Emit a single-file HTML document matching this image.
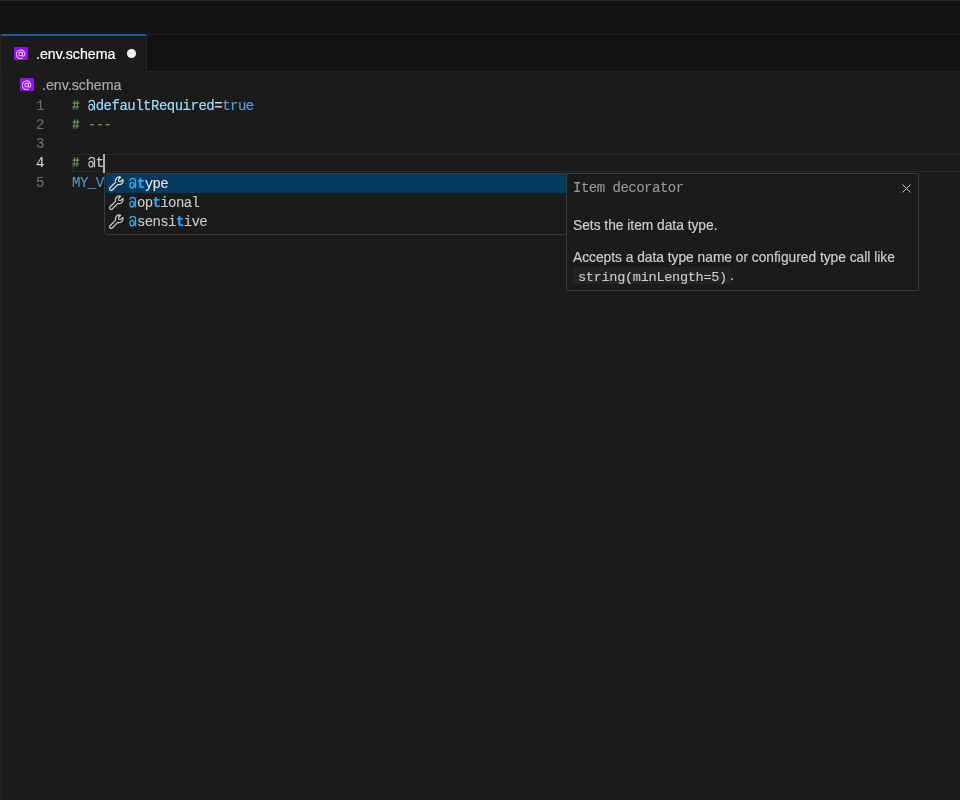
<!DOCTYPE html>
<html><head><meta charset="utf-8">
<style>
*{margin:0;padding:0;box-sizing:border-box}
body *{-webkit-text-stroke:0.2px currentColor}
html,body{-webkit-font-smoothing:antialiased;width:960px;height:800px;overflow:hidden;background:#1b1b1b;font-family:"Liberation Sans",sans-serif}
.abs{position:absolute;will-change:transform}
#title{left:0;top:0;width:960px;height:34px;background:#141414;border-top:1px solid #282828}
#tabs{left:0;top:34px;width:960px;height:38px;background:#121212;border-bottom:1px solid #242424;border-top:1px solid #1f1f1f}
#tab{left:0;top:34px;width:147px;height:38px;background:#1b1b1b;border-right:1px solid #242424;border-left:1px solid #242424}
#tabline{left:1px;top:34px;width:145px;height:2px;background:#1d5896}
.ficon{width:14px;height:13px;background:#8a14f0;border-radius:1px}
.ficon svg{position:absolute;left:1.8px;top:1.6px}
#tabtext{left:36px;top:45px;font-size:14.2px;color:#ffffff;line-height:18px;white-space:nowrap}
#dot{left:126.6px;top:49px;width:8.6px;height:8.6px;border-radius:50%;background:#f0f0f0}
#crumb{left:42px;top:76px;font-size:14.2px;color:#a9a9a9;line-height:18px;white-space:nowrap}
.code{font-family:"Liberation Mono",monospace;font-size:14px;letter-spacing:-0.5px;-webkit-text-stroke:0.1px currentColor;white-space:pre;line-height:19px}
.ln{left:0;width:44px;text-align:right;color:#6c6c6c}
.line{left:72px}
#curline{left:72px;top:154px;width:888px;height:18px;border:1px solid #282828;border-right:none}
#cursor{left:102.5px;top:153.5px;width:2px;height:18.5px;background:#aeafad}
#suggest{left:104px;top:173px;width:463px;height:62px;background:#1b1b1b;border:1px solid #3a3a3a;border-radius:3px;overflow:hidden}
.row{position:absolute;left:1px;width:460px;height:19px}
.row.sel{background:#04395e}
.hl{color:#2aaaff;font-weight:bold}
.hash{display:inline-block;width:7.9px;height:19px;vertical-align:top;position:relative}
.hash svg{position:absolute;left:0;top:0}
.atg{display:inline-block;width:7.9px;height:19px;vertical-align:top;position:relative}
.atg svg{position:absolute;left:0;top:0}
#details{left:566px;top:173px;width:353px;height:118px;background:#1b1b1b;border:1px solid #3a3a3a}
.dtext{font-size:13.75px;color:#cccccc;white-space:nowrap;line-height:16px}
.inl{background:#232323;border-radius:3px}
</style></head><body>
<div id="title" class="abs"></div>
<div id="tabs" class="abs"></div>
<div id="tab" class="abs"></div>
<div id="tabline" class="abs"></div>
<div class="abs ficon" style="left:14px;top:47px"><svg width="10" height="10" viewBox="0 0 10 10"><g fill="none" stroke="#f4b4ff" stroke-width="1.15"><circle cx="4.6" cy="5" r="1.85"/><path d="M6.45 3.1V5.9c0 .9.5 1.3 1.1 1.3s1.3-.5 1.3-1.9A4.3 4.3 0 1 0 6.6 9"/></g></svg></div>
<div id="tabtext" class="abs">.env.schema</div>
<div id="dot" class="abs"></div>
<div class="abs ficon" style="left:20px;top:78px"><svg width="10" height="10" viewBox="0 0 10 10"><g fill="none" stroke="#f4b4ff" stroke-width="1.15"><circle cx="4.6" cy="5" r="1.85"/><path d="M6.45 3.1V5.9c0 .9.5 1.3 1.1 1.3s1.3-.5 1.3-1.9A4.3 4.3 0 1 0 6.6 9"/></g></svg></div>
<div id="crumb" class="abs">.env.schema</div>

<div class="abs" style="left:0;top:72px;width:1px;height:728px;background:#222222"></div>
<div id="curline" class="abs"></div>
<div class="abs code ln" style="top:96.5px">1</div>
<div class="abs code ln" style="top:115.5px">2</div>
<div class="abs code ln" style="top:134.5px">3</div>
<div class="abs code ln" style="top:153.5px;color:#cccccc">4</div>
<div class="abs code ln" style="top:173.6px">5</div>
<div class="abs code line" style="top:96.5px"><span class="hash"><svg width="8" height="19" viewBox="0 0 8 19"><path d="M2.9 3.4L1.8 12.8M5.8 3.4L4.7 12.8M0.6 6.1H7.3M0.3 10H7" stroke="#6a9955" stroke-width="1.05" fill="none"/></svg></span> <span class="atg"><svg width="8" height="19" viewBox="0 0 8 19"><path d="M0.8 5.6C1.2 4 2.3 3.4 3.9 3.4 5.7 3.4 6.5 4.4 6.5 6.5V13.3M3 7.3C1.8 7.3 0.9 8.4 0.9 10.2S1.8 13 3 13 5.1 12 5.1 10.2 4.2 7.3 3 7.3Z" fill="none" stroke="#9cdcfe" stroke-width="1.15"/></svg></span><span style="color:#9cdcfe">defaultRequired</span><span style="color:#d4d4d4">=</span><span style="color:#569cd6">true</span></div>
<div class="abs code line" style="top:115.5px;color:#6a9955"><span class="hash"><svg width="8" height="19" viewBox="0 0 8 19"><path d="M2.9 3.4L1.8 12.8M5.8 3.4L4.7 12.8M0.6 6.1H7.3M0.3 10H7" stroke="#6a9955" stroke-width="1.05" fill="none"/></svg></span> ---</div>
<div class="abs code line" style="top:153.5px"><span class="hash"><svg width="8" height="19" viewBox="0 0 8 19"><path d="M2.9 3.4L1.8 12.8M5.8 3.4L4.7 12.8M0.6 6.1H7.3M0.3 10H7" stroke="#6a9955" stroke-width="1.05" fill="none"/></svg></span> <span class="atg"><svg width="8" height="19" viewBox="0 0 8 19"><path d="M0.8 5.6C1.2 4 2.3 3.4 3.9 3.4 5.7 3.4 6.5 4.4 6.5 6.5V13.3M3 7.3C1.8 7.3 0.9 8.4 0.9 10.2S1.8 13 3 13 5.1 12 5.1 10.2 4.2 7.3 3 7.3Z" fill="none" stroke="#cccccc" stroke-width="1.15"/></svg></span><span style="color:#cccccc">t</span></div>
<div class="abs code line" style="top:173.6px;color:#5295d0">MY_V</div>
<div id="cursor" class="abs"></div>

<div id="suggest" class="abs">
  <div class="row sel" style="top:0"></div>
  <svg class="abs wr" style="left:3px;top:1.4px" width="17" height="17" viewBox="0 0 16 16"><path d="M10.5 1.8a3.6 3.6 0 0 0-3.3 4.9L1.9 12c-.6.6-.6 1.5 0 2.1s1.5.6 2.1 0l5.3-5.3a3.6 3.6 0 0 0 4.9-3.3c0-.5-.1-1-.3-1.4L11.8 6.2 10.1 5.9 9.8 4.2l2.1-2.1c-.4-.2-.9-.3-1.4-.3z" fill="none" stroke="#e8e8e8" stroke-width="1.1" stroke-linejoin="round"/></svg>
  <div class="abs code sug" style="left:24px;top:1px;color:#e8e8e8;letter-spacing:-0.6px"><span class="atg"><svg width="8" height="19" viewBox="0 0 8 19"><path d="M0.8 5.6C1.2 4 2.3 3.4 3.9 3.4 5.7 3.4 6.5 4.4 6.5 6.5V13.3M3 7.3C1.8 7.3 0.9 8.4 0.9 10.2S1.8 13 3 13 5.1 12 5.1 10.2 4.2 7.3 3 7.3Z" fill="none" stroke="#2aaaff" stroke-width="1.35"/></svg></span><span class="hl">t</span>ype</div>
  <svg class="abs wr" style="left:3px;top:20.4px" width="17" height="17" viewBox="0 0 16 16"><path d="M10.5 1.8a3.6 3.6 0 0 0-3.3 4.9L1.9 12c-.6.6-.6 1.5 0 2.1s1.5.6 2.1 0l5.3-5.3a3.6 3.6 0 0 0 4.9-3.3c0-.5-.1-1-.3-1.4L11.8 6.2 10.1 5.9 9.8 4.2l2.1-2.1c-.4-.2-.9-.3-1.4-.3z" fill="none" stroke="#cccccc" stroke-width="1.1" stroke-linejoin="round"/></svg>
  <div class="abs code sug" style="left:24px;top:20px;color:#cccccc;letter-spacing:-0.6px"><span class="atg"><svg width="8" height="19" viewBox="0 0 8 19"><path d="M0.8 5.6C1.2 4 2.3 3.4 3.9 3.4 5.7 3.4 6.5 4.4 6.5 6.5V13.3M3 7.3C1.8 7.3 0.9 8.4 0.9 10.2S1.8 13 3 13 5.1 12 5.1 10.2 4.2 7.3 3 7.3Z" fill="none" stroke="#2aaaff" stroke-width="1.35"/></svg></span>op<span class="hl">t</span>ional</div>
  <svg class="abs wr" style="left:3px;top:39.4px" width="17" height="17" viewBox="0 0 16 16"><path d="M10.5 1.8a3.6 3.6 0 0 0-3.3 4.9L1.9 12c-.6.6-.6 1.5 0 2.1s1.5.6 2.1 0l5.3-5.3a3.6 3.6 0 0 0 4.9-3.3c0-.5-.1-1-.3-1.4L11.8 6.2 10.1 5.9 9.8 4.2l2.1-2.1c-.4-.2-.9-.3-1.4-.3z" fill="none" stroke="#cccccc" stroke-width="1.1" stroke-linejoin="round"/></svg>
  <div class="abs code sug" style="left:24px;top:39px;color:#cccccc;letter-spacing:-0.6px"><span class="atg"><svg width="8" height="19" viewBox="0 0 8 19"><path d="M0.8 5.6C1.2 4 2.3 3.4 3.9 3.4 5.7 3.4 6.5 4.4 6.5 6.5V13.3M3 7.3C1.8 7.3 0.9 8.4 0.9 10.2S1.8 13 3 13 5.1 12 5.1 10.2 4.2 7.3 3 7.3Z" fill="none" stroke="#2aaaff" stroke-width="1.35"/></svg></span>sensi<span class="hl">t</span>ive</div>
</div>
<div id="details" class="abs">
  <div class="abs code" style="left:6px;top:5px;color:#9a9a9a;line-height:19px">Item decorator</div>
  <svg class="abs" style="left:335px;top:10px" width="9" height="9" viewBox="0 0 9 9"><path d="M0.5 0.5L8.5 8.5M8.5 0.5L0.5 8.5" stroke="#c8c8c8" stroke-width="1"/></svg>
  <div class="abs dtext" style="left:6px;top:43.5px">Sets the item data type.</div>
  <div class="abs dtext" style="left:6px;top:75.5px">Accepts a data type name or configured type call like</div>
  <div class="abs inl" style="left:5.5px;top:93px;width:158px;height:17px"></div>
  <div class="abs code" style="left:10.5px;top:93.5px;font-size:13.6px;letter-spacing:-0.32px;color:#cccccc">string(minLength=5)</div>
  <div class="abs dtext" style="left:163px;top:93.5px">.</div>
</div>
</body></html>
